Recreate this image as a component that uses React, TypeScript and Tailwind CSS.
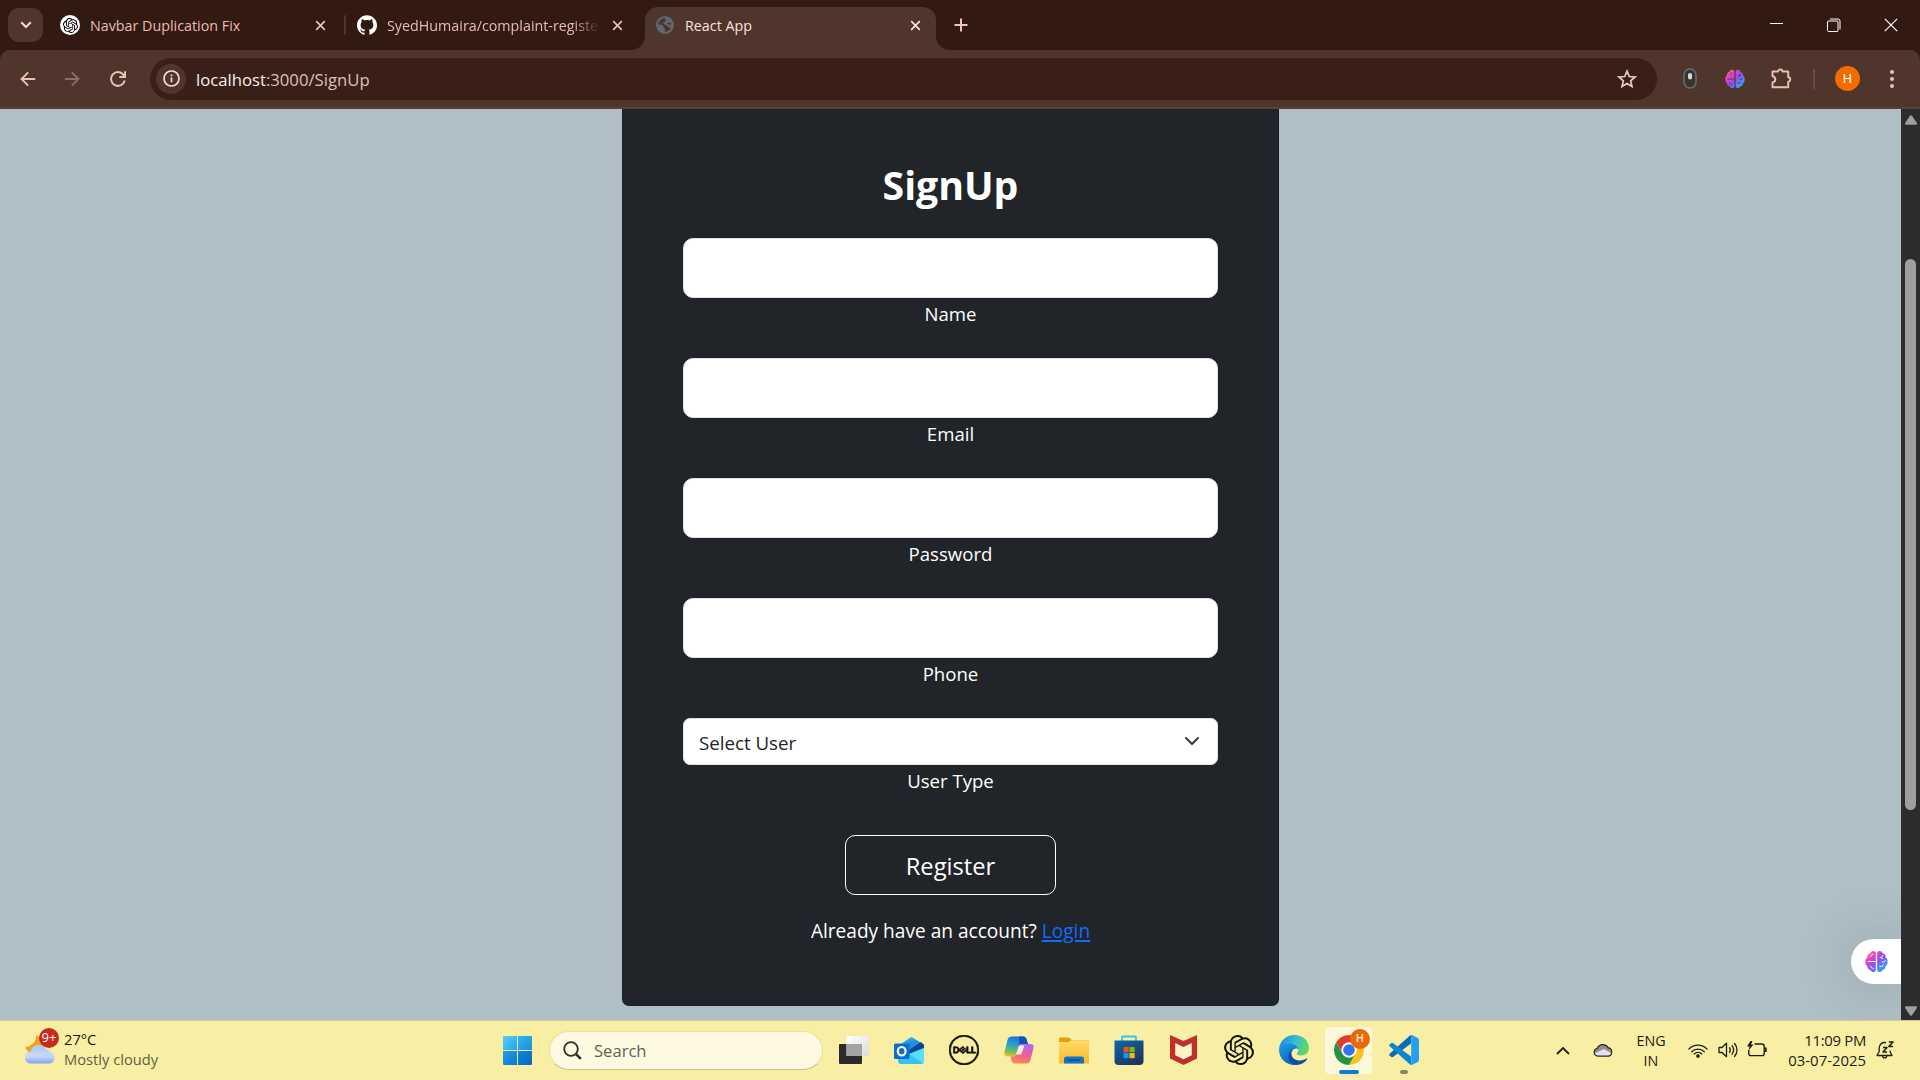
import type { ReactNode } from "react";
import { SiOpenai, SiDell, SiGithub } from "react-icons/si";

function BrainIcon({ id, className, line }: { id: string; className: string; line: string }) {
  return (
    <svg viewBox="0 0 24 24" className={className}>
      <defs>
        <linearGradient id={id} x1="0.1" y1="0" x2="0.95" y2="0.9">
          <stop offset="0" stopColor="#ffa51f" />
          <stop offset="0.25" stopColor="#f03fc0" />
          <stop offset="0.55" stopColor="#8b52f0" />
          <stop offset="1" stopColor="#22b5ff" />
        </linearGradient>
      </defs>
      <path
        d="M11.3 3.2v17.6c0 1.2-1.2 2.2-2.6 2.2-1.500 0-2.700-.9-3.100-2.200C3.600 20.500 2.300 19 2.500 17 1 16 0 14.200.5 12 .2 10.200 1 8.700 2.400 7.800 2.200 5.600 3.400 3.900 5.300 3.500 5.800 2 7.100 1 8.700 1c1.500 0 2.600.9 2.600 2.200ZM12.700 3.200v17.600c0 1.200 1.200 2.200 2.600 2.200 1.500 0 2.700-.9 3.100-2.200 2-.3 3.300-1.800 3.100-3.800 1.500-1 2.500-2.800 2-5 .3-1.800-.5-3.300-1.900-4.200.2-2.200-1-3.900-2.900-4.300C18.200 2 16.900 1 15.300 1c-1.500 0-2.600.9-2.600 2.200Z"
        fill={`url(#${id})`}
      />
      <path
        d="M3 12h8M6 7c0-1.500 1-2.500 2.700-2.300M5.700 16.500c.3 1.800 1.500 2.700 3.500 2.700M15.500 8h2l1-2.500M17.500 8l1 1.500M17.500 12.500h2l2-1.500M15 17h2.500l2-1.500"
        fill="none"
        stroke={line}
        strokeWidth="1"
      />
    </svg>
  );
}

function CloseX({ className }: { className: string }) {
  return (
    <svg viewBox="0 0 12 12" className={className} fill="none" stroke="currentColor" strokeWidth="1.9">
      <path d="M1.300 1.300l9.400 9.400M10.700 1.300L1.300 10.700" />
    </svg>
  );
}

function TabStrip() {
  return (
    <div className="flex h-[50px] items-center bg-[#321912] pl-2 text-[14.3px] text-[#e8bdb1]">
      <div className="flex h-[34px] w-[35px] items-center justify-center rounded-[11px] bg-[#50352d]">
        <svg viewBox="0 0 12 8" className="h-2 w-3" fill="none" stroke="#f5dcd5" strokeWidth="2">
          <path d="M1.200 1.200L6 6l4.800-4.800" />
        </svg>
      </div>
      <div className="ml-[17px] flex w-[284px] items-center">
        <div className="flex size-5 items-center justify-center rounded-full bg-white">
          <SiOpenai className="size-[15px] text-black" />
        </div>
        <span className="ml-[10px] w-[225px] pt-[2px] whitespace-nowrap">Navbar Duplication Fix</span>
        <CloseX className="size-[11px]" />
      </div>
      <div className="h-5 w-[2px] rounded bg-[#50352d]" />
      <div className="ml-[11px] flex w-[288px] items-center">
        <SiGithub className="size-5 text-white" />
        <span className="ml-[10px] w-[213px] pt-[2px] whitespace-nowrap [mask-image:linear-gradient(to_right,black_185px,transparent_213px)]">
          SyedHumaira/complaint-registe
        </span>
        <CloseX className="ml-[12px] size-[11px]" />
      </div>
      <div className="relative mt-[7px] flex h-[43px] w-[291px] items-center rounded-t-[13px] bg-[#50352d] pb-[7px] pl-[11px] text-[#f8e2dc]">
        <svg viewBox="0 0 14 14" className="absolute bottom-0 -left-[14px] size-[14px]" fill="#50352d">
          <path d="M14 0v14H0A14 14 0 0 0 14 0Z" />
        </svg>
        <svg viewBox="0 0 14 14" className="absolute -right-[14px] bottom-0 size-[14px]" fill="#50352d">
          <path d="M0 0v14h14A14 14 0 0 1 0 0Z" />
        </svg>
        <svg viewBox="0 0 18 18" className="size-[18px]">
          <circle cx="9" cy="9" r="9" fill="#5f6970" />
          <path
            d="M9.500 2C6 1.800 2.500 4.500 2 8.500c1.700.5 3.500 0 5 1 1 .8 0 2 1.300 2.700 1 .5 1 1.800.2 3.500 2.500.4 5-1 6.500-3.500-1.300-.8-2.700-1-3.500-2.200C10.800 8.500 9 9.200 7.800 8 6.500 6.500 9 6.300 9.500 5c.3-1-.5-1.800 0-3Z"
            fill="#50352d"
          />
          <path d="M11.500 7.500c1.200.2 2.500-.2 3.800.6" stroke="#50352d" strokeWidth="1.600" fill="none" />
        </svg>
        <span className="ml-[11px] w-[225px] pt-[2px] whitespace-nowrap">React App</span>
        <CloseX className="size-[11px]" />
      </div>
      <svg viewBox="0 0 14 14" className="ml-[18px] size-[14px]" fill="none" stroke="#f0c4b8" strokeWidth="2">
        <path d="M7 .5v13M.5 7h13" />
      </svg>
      <div className="ml-auto flex items-center pr-[22px] text-white">
        <div className="mr-px mb-[3px] h-px w-[13px] bg-white" />
        <svg viewBox="0 0 14 14" className="ml-[43px] size-[14px]" fill="none" stroke="currentColor">
          <rect x=".5" y="3" width="10.500" height="10.500" rx="1" />
          <path d="M3 1h8a2 2 0 0 1 2 2v8.500" />
        </svg>
        <svg viewBox="0 0 14 14" className="ml-[43px] size-[14px]" fill="none" stroke="currentColor" strokeWidth="1.200">
          <path d="M.8.8l12.400 12.400M13.200.8L.8 13.200" />
        </svg>
      </div>
    </div>
  );
}

function Toolbar() {
  return (
    <div className="bg-[#321912]">
      <div className="flex h-[59px] items-center rounded-t-[10px] border-b-2 border-[#5a423b] bg-[#50352d] pl-5 text-[#ecc0b4]">
        <svg viewBox="0 0 16 16" className="size-4" fill="none" stroke="currentColor" strokeWidth="1.900">
          <path d="M15.200 8H1.800M8.200 1.300L1.500 8l6.700 6.700" />
        </svg>
        <svg viewBox="0 0 16 16" className="ml-[28px] size-4 text-[#8c6c63]" fill="none" stroke="currentColor" strokeWidth="1.900">
          <path d="M.8 8h13.400M7.800 1.300L14.500 8l-6.700 6.700" />
        </svg>
        <svg viewBox="0 0 16 16" className="ml-[30px] size-4" fill="none" stroke="currentColor" strokeWidth="2">
          <path d="M14.700 9.500A6.900 6.900 0 1 1 13.500 3.800L14.700 5.500" />
          <path d="M15 .3V6H9.300" />
        </svg>
        <div className="ml-6 flex h-[42px] w-[1507px] items-center rounded-full bg-[#3a1f19] pr-5 pl-[6px]">
          <div className="flex size-[30px] items-center justify-center rounded-full bg-[#50352d]">
            <svg viewBox="0 0 17 17" className="size-[17px]" fill="none" stroke="#f3dcd5" strokeWidth="1.700">
              <circle cx="8.500" cy="8.500" r="7.500" />
              <path d="M8.500 7.500v4.700M8.500 4.500v1.700" />
            </svg>
          </div>
          <span className="ml-[10px] pt-[2px] text-[16.7px] text-[#d9c1ba]">
            <span className="text-[#fbeeea]">localhost</span>:3000/SignUp
          </span>
          <svg viewBox="0 0 20 20" className="ml-auto size-5" fill="none" stroke="#e3cbc4" strokeWidth="1.700">
            <path d="M10 2.200l2.250 5.300 5.750.5-4.350 3.800 1.300 5.600L10 14.400l-4.950 3 1.300-5.600L2 8l5.750-.5Z" />
          </svg>
        </div>
        <svg viewBox="0 0 14 21" className="ml-[26px] h-[21px] w-[14px]">
          <rect x="1" y="1" width="12" height="19" rx="6" fill="#433029" stroke="#547787" strokeWidth="1.500" />
          <rect x="5" y="5" width="4" height="6.500" rx="2" fill="#c9dce6" />
        </svg>
        <BrainIcon id="brain-toolbar" className="ml-[28px] size-5" line="#50352d" />
        <svg viewBox="0 0 21 21" className="ml-[26px] size-[21px]" fill="none" stroke="currentColor" strokeWidth="1.900" strokeLinejoin="round">
          <path d="M1.500 3.500H7a2.200 2 0 0 1 4.400 0h5.800v5.800a2 2.200 0 0 1 0 4.400v5.600H1.500v-4.900c3.800-.8 3.800-5.400 0-6.200Z" />
        </svg>
        <div className="ml-[21px] h-5 w-[2px] bg-[#6b4a41]" />
        <div className="ml-[20px] flex size-[25px] items-center justify-center rounded-full bg-[#f26c00] font-[Roboto] text-[13px] text-white">
          H
        </div>
        <svg viewBox="0 0 4 18" className="ml-[30px] h-[18px] w-1" fill="currentColor">
          <circle cx="2" cy="2" r="2" />
          <circle cx="2" cy="9" r="2" />
          <circle cx="2" cy="16" r="2" />
        </svg>
      </div>
    </div>
  );
}

function Field({ label }: { label: string }) {
  return (
    <div className="mb-[30px]">
      <div className="h-[60px] rounded-[10px] border border-[#dee2e6] bg-white" />
      <div className="h-[30px] text-center text-[18.600px] leading-[32px]">{label}</div>
    </div>
  );
}

function SignUpCard() {
  return (
    <div className="flex h-[897px] w-[657px] flex-col rounded-b-[7px] border border-t-0 border-[#1b1e22] bg-[#212429] px-[60px] pt-[46px] text-white">
      <h2 className="mb-[23px] h-[60px] text-center text-[39.200px] leading-[59px] font-bold">SignUp</h2>
      <Field label="Name" />
      <Field label="Email" />
      <Field label="Password" />
      <Field label="Phone" />
      <div className="flex h-[47px] items-center justify-between rounded-[7px] border border-[#dee2e6] bg-white pr-[17px] pl-[15px] text-[18.700px] text-[#212529]">
        <span className="pt-[3px]">Select User</span>
        <svg viewBox="0 0 16 16" className="mb-px size-4" fill="none" stroke="#343a40" strokeWidth="2" strokeLinecap="round" strokeLinejoin="round">
          <path d="m2 5 6 6 6-6" />
        </svg>
      </div>
      <div className="h-[30px] text-center text-[18.600px] leading-[32px]">User Type</div>
      <div className="mt-[40px] flex h-[60px] w-[211px] items-center justify-center self-center rounded-[10px] border border-white pt-[3px] text-[23.700px]">
        Register
      </div>
      <p className="mt-[21px] text-center text-[19.100px] leading-[30px]">
        Already have an account?{" "}
        <a className="text-[#0d6efd] underline decoration-2 underline-offset-2">Login</a>
      </p>
    </div>
  );
}

function PageArea() {
  return (
    <div className="flex h-[911px] bg-[#b0bec5]">
      <div className="relative flex flex-1 justify-center overflow-hidden">
        <SignUpCard />
        <div className="absolute right-0 bottom-[36px] flex h-[45px] w-[50px] items-center rounded-l-full bg-white pl-[14px] shadow-[0_0_50px_rgba(60,75,85,0.25)]">
          <BrainIcon id="brain-widget" className="size-[23px]" line="#ffffff" />
        </div>
      </div>
      <div className="flex w-[19px] flex-col items-center bg-[#2c2c2c]">
        <svg viewBox="0 0 12 10" className="mt-[6px] h-[10px] w-3" fill="#9f9f9f">
          <path d="M5 .8a1.300 1.300 0 0 1 2 0l4.700 7c.6 1 .1 2-1 2H1.300c-1.100 0-1.600-1-1-2Z" />
        </svg>
        <div className="mt-[134px] h-[551px] w-[11px] rounded-full bg-[#9f9f9f]" />
        <svg viewBox="0 0 12 10" className="mt-auto mb-[4px] h-[10px] w-3 rotate-180" fill="#9f9f9f">
          <path d="M5 .8a1.300 1.300 0 0 1 2 0l4.700 7c.6 1 .1 2-1 2H1.300c-1.100 0-1.600-1-1-2Z" />
        </svg>
      </div>
    </div>
  );
}

function Weather() {
  return (
    <div className="flex w-[478px] items-center pl-[25px]">
      <div className="relative mb-[6px] size-[34px]">
        <svg viewBox="0 0 34 34" className="size-[34px]">
          <defs>
            <linearGradient id="cloud" x1="0" y1="0" x2="0" y2="1">
              <stop offset="0" stopColor="#a9c8f8" />
              <stop offset="0.600" stopColor="#c9daf8" />
              <stop offset="1" stopColor="#7fa5ea" />
            </linearGradient>
          </defs>
          <path d="M11 4C12 9 7 16 0 16c2 6 9 8 14 4 4-3 5-8 4-12Z" fill="#f3a01c" />
          <path d="M6 32.500a6 6 0 0 1-.5-12A8.500 8.500 0 0 1 21 18a7 7 0 0 1 4 2.700 6 6 0 0 1-.8 11.800Z" fill="url(#cloud)" />
        </svg>
        <div className="absolute -top-[3px] left-[14px] flex size-5 items-center justify-center rounded-full bg-[#c42b1c] text-[13px] text-white">
          9+
        </div>
      </div>
      <div className="ml-[5px] pb-[3px] text-[14.700px] leading-[20px]">
        <div className="text-[#1c1b12]">27°C</div>
        <div className="text-[#625e44]">Mostly cloudy</div>
      </div>
    </div>
  );
}

function AppCell({ children }: { children: ReactNode }) {
  return <div className="flex h-[59px] w-[55px] items-center justify-center pb-px">{children}</div>;
}

function TaskApps() {
  return (
    <>
      <AppCell>
        <svg viewBox="0 0 30 28" className="h-[28px] w-[30px]">
          <defs>
            <linearGradient id="tv" x1="0" y1="0" x2="1" y2="1">
              <stop offset="0" stopColor="#ffffff" />
              <stop offset="1" stopColor="#dcdcdc" />
            </linearGradient>
          </defs>
          <rect y="8" width="23" height="20" rx="1" fill="#2b2b2b" />
          <rect x="7.500" y="0" width="22.500" height="20" rx="1" fill="url(#tv)" />
          <rect x="7.500" y="8" width="15.500" height="12" fill="#a3a3a3" />
        </svg>
      </AppCell>
      <AppCell>
        <svg viewBox="0 0 30 27" className="h-[27px] w-[30px]">
          <path d="M4 9L16.500.5Q17.500 0 18.500.5L30 8v4L4 22Z" fill="#2aa3ea" />
          <path d="M9 7L22 3l8 5-14 9Z" fill="#1f8fe0" />
          <path d="M15 13L27 5l3 3v4L14 21Z" fill="#0a4596" />
          <path d="M4 15l11 2 15-6v13a3 3 0 0 1-3 3H7a3 3 0 0 1-3-3Z" fill="#35c3f2" />
          <path d="M30 11v13a3 3 0 0 1-1 2.200L15 17Z" fill="#5bdcfb" />
          <rect y="6.500" width="15.500" height="15.500" rx="1.500" fill="#0f6cd0" />
          <ellipse cx="7.700" cy="14.200" rx="3.900" ry="4.200" fill="none" stroke="#fff" strokeWidth="2.200" />
        </svg>
      </AppCell>
      <AppCell>
        <SiDell className="size-[30px] stroke-[#141310] stroke-[0.5] text-[#141310]" />
      </AppCell>
      <AppCell>
        <svg viewBox="0 0 30 28" className="h-[28px] w-[30px]">
          <defs>
            <linearGradient id="cp-a" x1="0.500" y1="0" x2="0.300" y2="1">
              <stop offset="0" stopColor="#1c6fe0" />
              <stop offset="0.450" stopColor="#27a6c9" />
              <stop offset="0.800" stopColor="#7cc04f" />
              <stop offset="1" stopColor="#e8c42a" />
            </linearGradient>
            <linearGradient id="cp-b" x1="0.700" y1="0" x2="0.300" y2="1">
              <stop offset="0" stopColor="#a86af2" />
              <stop offset="0.500" stopColor="#ec5f9a" />
              <stop offset="1" stopColor="#fb8a4a" />
            </linearGradient>
          </defs>
          <path d="M8 .5h11c2 0 3 1 3.600 3L24 8h-6c-2 0-3 1-3.500 2.500L12 18c-.5 1.500-1.500 2.500-3.500 2.500H3.500C1 20.500 0 18.500.5 16L3.500 4C4.200 1.500 5.500.5 8 .5Z" fill="url(#cp-a)" />
          <path d="M15 .5h4c2 0 3 1 3.600 3L24 8h-6c-2 0-2.500.5-3 1.500Z" fill="#1650b8" />
          <path d="M22 27.500H11c-2 0-3-1-3.500-3L6.500 20.500H9c2 0 3-1 3.500-2.500l2.500-7.500C15.500 9 16.500 8 18.500 8h8C29 8 30 9.500 29.500 12l-3 12c-.7 2.500-2 3.500-4.500 3.500Z" fill="url(#cp-b)" />
          <path d="M15.500 9.500h5l-3.300 9h-5Z" fill="#fbeede" />
        </svg>
      </AppCell>
      <AppCell>
        <svg viewBox="0 0 30 27" className="h-[27px] w-[30px]">
          <defs>
            <linearGradient id="folder" x1="0" y1="0" x2="0" y2="1">
              <stop offset="0" stopColor="#ffdc68" />
              <stop offset="1" stopColor="#fbb92a" />
            </linearGradient>
          </defs>
          <path d="M0 2Q0 .5 1.500.5H9q1 0 1.700.6L13 3.200h15.500Q30 3.200 30 4.700V12H0Z" fill="#e0a008" />
          <path d="M0 5h9.500l2.500-1.700h18V25.500Q30 26.500 29 26.500H1Q0 26.500 0 25.500Z" fill="url(#folder)" />
          <path d="M5 26.500V22q0-2.500 2.500-2.500h15Q25 19.500 25 22v4.500Z" fill="#1173c9" />
          <path d="M8.500 23h13" stroke="#0b4c8c" strokeWidth="1.400" />
        </svg>
      </AppCell>
      <AppCell>
        <svg viewBox="0 0 30 30" className="size-[30px]">
          <defs>
            <linearGradient id="store" x1="0" y1="0" x2="0.600" y2="1">
              <stop offset="0" stopColor="#0d68ae" />
              <stop offset="1" stopColor="#1f355f" />
            </linearGradient>
          </defs>
          <path d="M8 6V2.500q0-1 1-1h12q1 0 1 1V6" fill="none" stroke="#2fc3f5" strokeWidth="1.800" />
          <path d="M.5 5.500h29V26q0 4-4 4h-21q-4 0-4-4Z" fill="url(#store)" />
          <rect x="9.500" y="12" width="5.200" height="5.200" fill="#f25022" />
          <rect x="15.500" y="12" width="5.200" height="5.200" fill="#7fba00" />
          <rect x="9.500" y="18" width="5.200" height="5.200" fill="#00a4ef" />
          <rect x="15.500" y="18" width="5.200" height="5.200" fill="#ffb900" />
        </svg>
      </AppCell>
      <AppCell>
        <svg viewBox="0 0 27 30" className="h-[30px] w-[27px]">
          <path d="M5 7l8.500 4L22 7v14l-8.500 4L5 21Z" fill="#fbf3c9" />
          <path d="M0 0l13.500 6L27 0v23.500L13.500 30 0 23.500Zm5.200 8v12.300l8.300 4 8.300-4V8l-8.300 3.900Z" fill="#c0302b" fillRule="evenodd" />
        </svg>
      </AppCell>
      <AppCell>
        <SiOpenai className="size-[30px] text-[#141310]" />
      </AppCell>
      <AppCell>
        <svg viewBox="0 0 30 30" className="size-[30px]">
          <defs>
            <linearGradient id="edge-top" x1="0" y1="0.300" x2="1" y2="0.600">
              <stop offset="0" stopColor="#2387d8" />
              <stop offset="0.500" stopColor="#35bfd3" />
              <stop offset="1" stopColor="#62dc53" />
            </linearGradient>
            <linearGradient id="edge-low" x1="0" y1="0" x2="0.500" y2="1">
              <stop offset="0" stopColor="#1d9be8" />
              <stop offset="1" stopColor="#0a66c2" />
            </linearGradient>
          </defs>
          <path d="M0 14C1 5 8 0 15 0c9 0 15 6 15 12.800 0 5-3.600 7.700-8 7.700-3.200 0-4.800-1-4.200-2.200 1-1 1.700-2 1.700-3.600C19 12 16 9.500 11 9.500 5 9.500 1 12 0 14Z" fill="url(#edge-top)" />
          <path d="M0 14.500C.5 11 5 8.700 10 8.700c5.500 0 9.300 2.700 9.600 6-.9-1.500-5.100-2.300-7.600 2.800-2 5 2.500 11.500 8.500 11.500C11 32.500 0 26 0 14.500Z" fill="url(#edge-low)" />
          <path d="M15.200 13.200c-1.700 1.300-2.800 3-2.800 5.300 0 4.500 4 7 8.600 7 3 0 5-1.200 6.300-2 .7-.4 1.200.2.800.8C26 27.500 22.500 29.500 19 29.800 13 30 9.500 26.500 9.500 22c0-4.500 2.500-8 5.700-8.800Z" fill="#0d4f9e" />
        </svg>
      </AppCell>
      <div className="flex w-[55px] items-center justify-center">
        <div className="relative flex h-[49px] w-[49px] items-center justify-center rounded-[5px] border border-[#f3eab8] bg-[#fdf8d6]">
          <svg viewBox="0 0 48 48" className="mb-px size-[30px]">
            <path d="M3.220 12A24 24 0 0 1 44.780 12H24A12 12 0 0 0 13.610 30Z" fill="#e33b2e" />
            <path d="M44.780 12A24 24 0 0 1 24 48L34.390 30A12 12 0 0 0 24 12Z" fill="#fcc31e" />
            <path d="M24 48A24 24 0 0 1 3.220 12L13.610 30A12 12 0 0 0 34.390 30Z" fill="#229342" />
            <circle cx="24" cy="24" r="12" fill="#fff" />
            <circle cx="24" cy="24" r="9.300" fill="#2f74ea" />
          </svg>
          <div className="absolute top-[2px] right-[2px] flex size-5 items-center justify-center rounded-full bg-[#e8680a] font-[Roboto] text-[11px] font-medium text-[#ffe9d6]">
            H
          </div>
          <div className="absolute bottom-0 h-1 w-5 rounded-full bg-[#0b7bd3]" />
        </div>
      </div>
      <div className="flex h-[59px] w-[55px] flex-col items-center">
        <svg viewBox="0 0 30 30" className="mt-[14px] size-[30px]">
          <path d="M22 .5V8.500L4 22q-1 .7-1.800 0L.6 20.500q-1-.8 0-1.700L21 .5Z" fill="#0a6db8" />
          <path d="M22 29.500v-8L4 8q-1-.7-1.800 0L.6 9.500q-1 .8 0 1.700L21 29.500Z" fill="#0f84d4" />
          <path d="M20.500.7Q21.800-.3 23.300.3L28.500 2.800Q30 3.600 30 5.200v19.600q0 1.600-1.500 2.400l-5.200 2.500q-1.500.6-2.800-.4 1.700.4 1.700-1.600V2.300Q22.200.3 20.500.7Z" fill="#25a0f0" />
        </svg>
        <div className="mt-[5px] h-1 w-2 rounded-full bg-[#8b8765]" />
      </div>
    </>
  );
}

function Tray() {
  return (
    <div className="ml-auto flex items-center text-[#1f1e14]">
      <svg viewBox="0 0 14 8" className="h-2 w-[14px]" fill="none" stroke="currentColor" strokeWidth="1.800">
        <path d="M1 7l6-6 6 6" />
      </svg>
      <svg viewBox="0 0 20 14" className="mb-[2px] ml-[23px] h-[14px] w-5">
        <path d="M5 13.200A4 4 0 0 1 4.300 5.300 6 6 0 0 1 15 4.600a4.400 4.400 0 0 1 .5 8.600Z" fill="#8f8f92" />
        <path d="M1.300 10.500L11 6l7.800 4.500a4 4 0 0 1-3.300 2.700H5a4 4 0 0 1-3.700-2.700Z" fill="#e3e3ee" />
        <path d="M5 13.200A4 4 0 0 1 4.300 5.300 6 6 0 0 1 15 4.600a4.400 4.400 0 0 1 .5 8.600Z" fill="none" stroke="#2b2b28" strokeWidth="1.200" />
      </svg>
      <div className="ml-[23px] w-[30px] text-center text-[14.300px] leading-[20px]">
        <div>ENG</div>
        <div>IN</div>
      </div>
      <svg viewBox="0 0 20 15" className="mb-px ml-[22px] h-[15px] w-5" fill="none" stroke="currentColor" strokeWidth="1.300" strokeLinecap="round">
        <path d="M1 6a12.500 12.500 0 0 1 18 0M3.700 8.700a8.800 8.800 0 0 1 12.600 0M6.300 11a5.200 5.200 0 0 1 7.400 0" />
        <circle cx="10" cy="13" r="1.200" fill="currentColor" />
      </svg>
      <svg viewBox="0 0 20 16" className="mb-px ml-[10px] h-4 w-5" fill="none" stroke="currentColor" strokeWidth="1.300" strokeLinecap="round" strokeLinejoin="round">
        <path d="M1 5.500h3L8.500 1.300v13.400L4 10.500H1Z" />
        <path d="M11.500 5.700c1 1.400 1 3.200 0 4.600M14 3.700c2 2.600 2 6 0 8.600M16.500 1.500c3.300 3.700 3.300 9.300 0 13" />
      </svg>
      <svg viewBox="0 0 20 16" className="mb-[3px] ml-[9px] h-4 w-5" fill="none" stroke="currentColor" strokeWidth="1.400">
        <path d="M7.500 3h7.500q2.200 0 2.200 2.200v7.200q0 2.200-2.200 2.200H4q-2.200 0-2.200-2.200V9" />
        <path d="M18.700 6.500v4.500" strokeWidth="2" />
        <path d="M3.500 0L0 5.500h2.500L1.500 9.500 6.500 3.500H4L5.500 0Z" fill="currentColor" stroke="none" />
      </svg>
      <div className="ml-[20px] w-[79px] pb-[2px] text-right text-[14.900px] leading-[20px] whitespace-nowrap">
        <div className="tracking-[-0.3px]">11:09 PM</div>
        <div>03-07-2025</div>
      </div>
      <svg viewBox="0 0 18 18" className="mr-[26px] mb-px ml-[10px] size-[18px]" fill="none" stroke="currentColor" strokeWidth="1.300" strokeLinejoin="round">
        <path d="M10 1.700C6 .8 3.200 3.500 3.200 7v3.500L1 14.500h15l-1.800-3.500v-1.500" />
        <path d="M6.500 14.700c.3 3 4 3 4.300 0" />
        <path d="M7 6.500h4L7 11h4M12.800 1H17l-4.200 4.500H17" strokeWidth="1.500" />
      </svg>
    </div>
  );
}

function Taskbar() {
  return (
    <div className="flex h-[60px] items-center border-t border-[#d8cc8b] bg-[#f8efa5]">
      <Weather />
      <div className="ml-[25px] grid size-[29px] grid-cols-2 gap-px">
        <div className="rounded-tl-[1px] bg-linear-to-br from-[#57d0fb] to-[#1fa3e8]" />
        <div className="rounded-tr-[1px] bg-linear-to-br from-[#35b5f0] to-[#1590de]" />
        <div className="rounded-bl-[1px] bg-linear-to-br from-[#1f9fe6] to-[#0a78d0]" />
        <div className="rounded-br-[1px] bg-linear-to-br from-[#1187da] to-[#0468c4]" />
      </div>
      <div className="ml-[17px] flex h-[39px] w-[274px] items-center rounded-full border border-[#e9dfa0] border-b-[#c6bf8c] bg-[#fefae1] pl-[13px]">
        <svg viewBox="0 0 19 19" className="size-[19px]" fill="none" stroke="#2f2e28">
          <circle cx="8" cy="8" r="6.800" strokeWidth="1.800" />
          <path d="M12.800 12.800l5 5" strokeWidth="2.600" />
        </svg>
        <span className="ml-3 pt-[2px] text-[16.600px] text-[#64614f]">Search</span>
      </div>
      <div className="ml-[3px] flex items-center">
        <TaskApps />
      </div>
      <Tray />
    </div>
  );
}

export default function App() {
  return (
    <div className="flex h-[1080px] w-[1920px] flex-col overflow-hidden font-['Open_Sans','Noto_Sans',sans-serif]">
      <TabStrip />
      <Toolbar />
      <PageArea />
      <Taskbar />
    </div>
  );
}
